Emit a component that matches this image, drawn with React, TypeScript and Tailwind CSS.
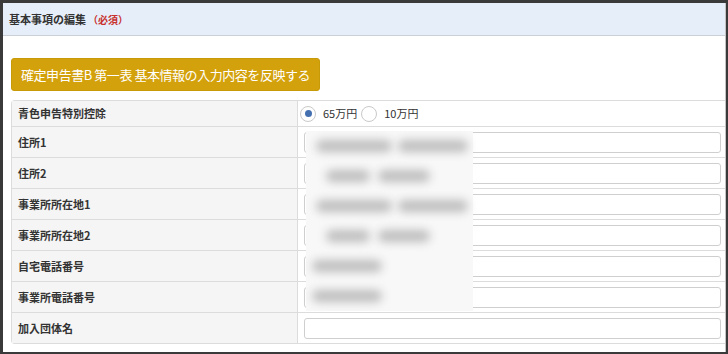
import * as React from "react";

const rows = [
  "住所1",
  "住所2",
  "事業所所在地1",
  "事業所所在地2",
  "自宅電話番号",
  "事業所電話番号",
  "加入団体名",
];

// smudges drawn in the redacted block, one per blurred row
const smudges = [
  [
    { l: 10, w: 76 },
    { l: 92, w: 70 },
  ],
  [
    { l: 20, w: 44 },
    { l: 72, w: 52 },
  ],
  [
    { l: 10, w: 76 },
    { l: 92, w: 70 },
  ],
  [
    { l: 20, w: 44 },
    { l: 72, w: 52 },
  ],
  [{ l: 6, w: 70 }],
  [{ l: 6, w: 70 }],
];

const Radio = ({ checked, label }: { checked?: boolean; label: string }) => (
  <label className="flex items-center gap-[7px]">
    <span className="flex h-[16px] w-[16px] items-center justify-center rounded-full border border-[#c9c9c9] bg-white">
      {checked && <span className="h-[7px] w-[7px] rounded-full bg-[#4470b0]" />}
    </span>
    <span className="text-[11px] text-[#333]">{label}</span>
  </label>
);

const App = () => {
  return (
    <div
      className="h-[354px] w-[728px] overflow-hidden bg-[#3a3a3a] pb-[2px] pl-[3px] pr-[2px] pt-[3px]"
      style={{ fontFamily: '"Noto Sans CJK JP", "Noto Sans", sans-serif' }}
    >
      <div className="flex h-full flex-col overflow-hidden border-r border-[#c4c4c4] bg-white">
        <div className="flex h-[33px] shrink-0 items-center border-b border-[#cbd0d6] bg-[#e6eefa] px-[6px]">
          <span className="text-[11px] font-bold text-[#333]">基本事項の編集</span>
          <span className="ml-[2px] text-[10px] font-bold text-[#c8312c]">（必須）</span>
        </div>

        <div className="flex pl-[8px] pt-[22px]">
          <button className="flex h-[33px] items-center whitespace-nowrap rounded-[3px] border border-[#c99a08] bg-[#d3a10b] px-[9px] text-[13px] tracking-[-0.45px] text-white">
            確定申告書B 第一表 基本情報の入力内容を反映する
          </button>
        </div>

        <div className="relative ml-[8px] mt-[9px] rounded-l-[4px] border-y border-l border-[#dcdcdc]">
          <div className="flex h-[25px]">
            <div className="flex w-[286px] items-center border-r border-[#dcdcdc] bg-[#f5f5f5] px-[6px] text-[11px] font-bold text-[#333]">
              青色申告特別控除
            </div>
            <div className="flex flex-1 items-center gap-[4px] px-[2px]">
              <Radio checked label="65万円" />
              <Radio label="10万円" />
            </div>
          </div>
          {rows.map((r) => (
            <div key={r} className="flex h-[31px] border-t border-[#dcdcdc]">
              <div className="flex w-[286px] items-center border-r border-[#dcdcdc] bg-[#f5f5f5] px-[6px] text-[11px] font-bold text-[#333]">
                {r}
              </div>
              <div className="flex flex-1 items-center pl-[6px] pr-[4px]">
                <div className="h-[21px] w-full rounded-[3px] border border-[#cfcfcf] bg-white" />
              </div>
            </div>
          ))}

          <div className="absolute left-[294px] top-[30px] flex h-[180px] w-[167px] flex-col bg-[#f8f8f8]">
            {smudges.map((s, i) => (
              <div key={i} className="relative h-[31px]">
                {s.map((m, j) => (
                  <div
                    key={j}
                    className="absolute top-[9px] h-[12px] rounded-full bg-[#bdbdbd] blur-[5px]"
                    style={{ left: m.l, width: m.w }}
                  />
                ))}
              </div>
            ))}
          </div>
        </div>
      </div>
    </div>
  );
};

export default App;
